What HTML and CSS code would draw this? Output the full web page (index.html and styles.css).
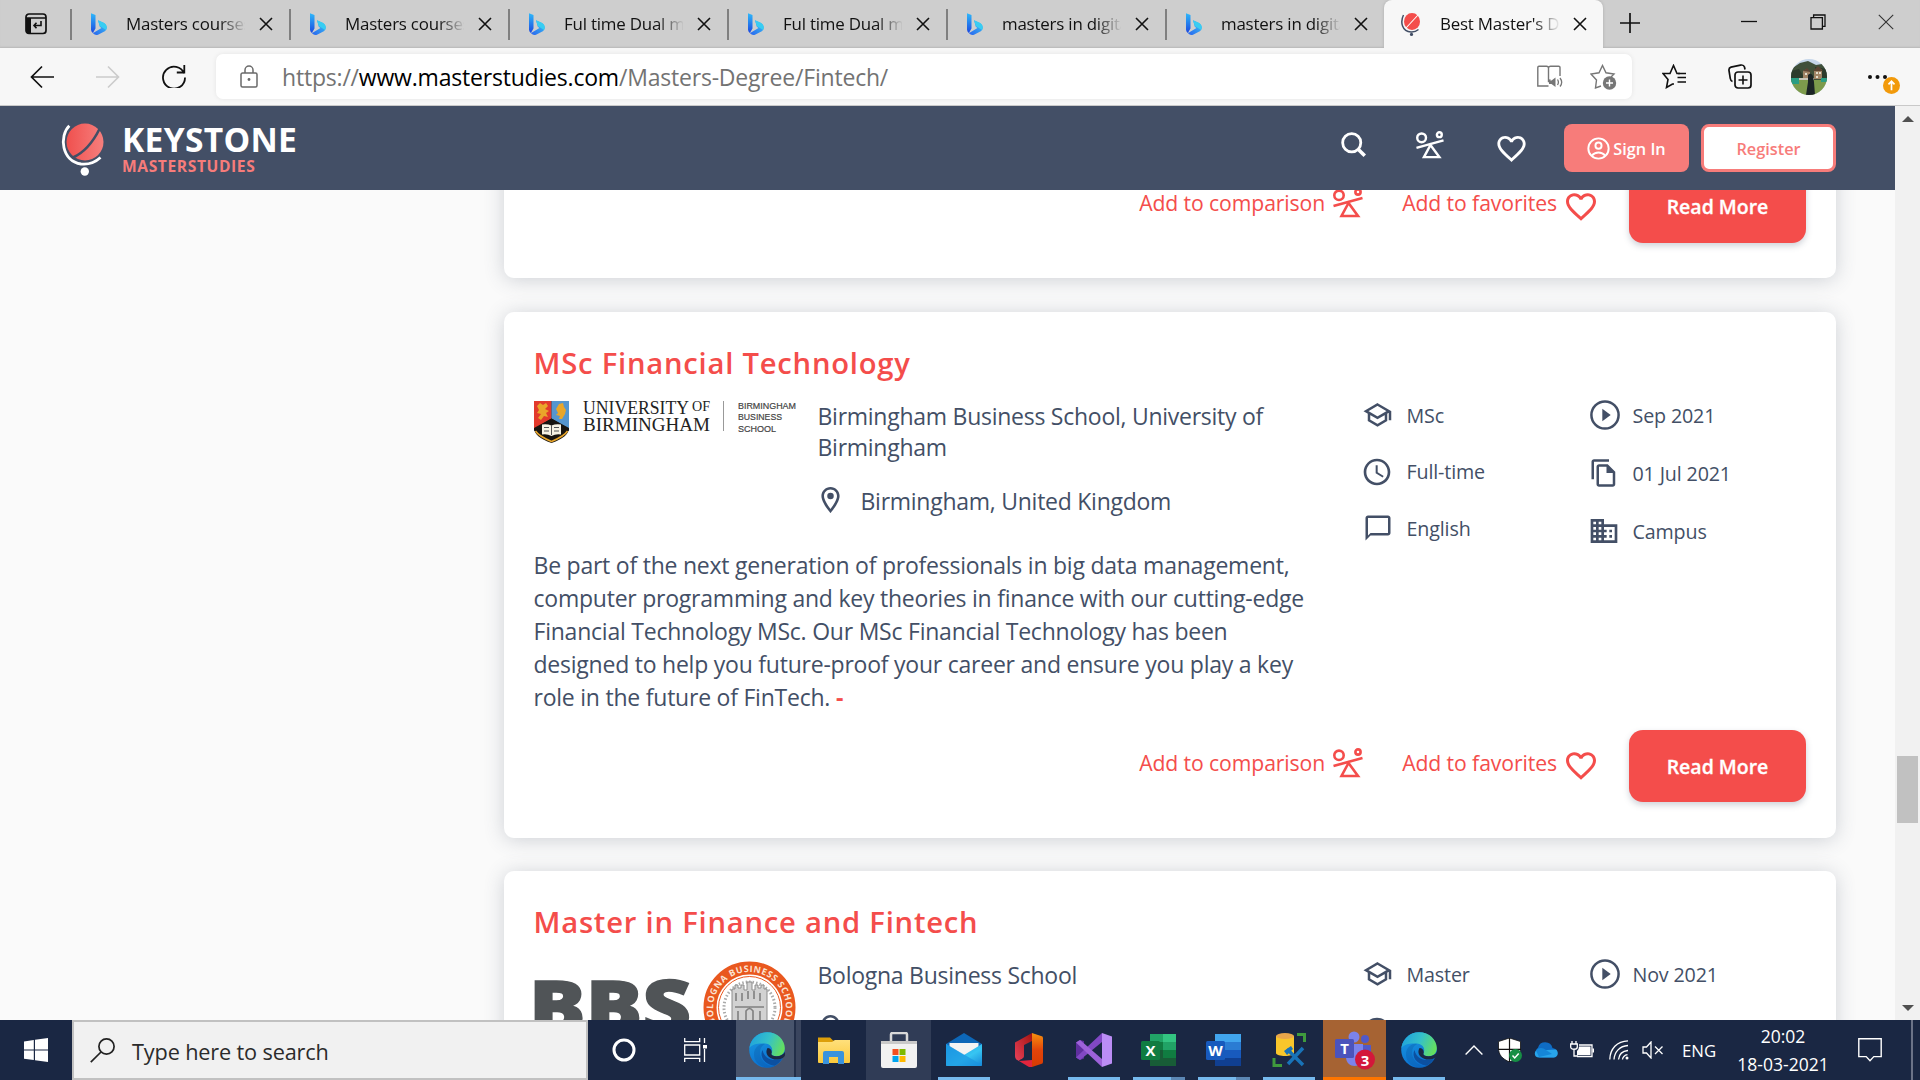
FILE: index.html
```html
<!DOCTYPE html>
<html lang="en">
<head>
<meta charset="utf-8">
<title>Best Master's Degrees in Fintech 2021</title>
<link rel="stylesheet" href="styles.css">
</head>
<body>
<svg class="sprite" aria-hidden="true">
  <defs>
    <linearGradient id="bingA" x1="0" y1="0" x2="0" y2="1"><stop offset="0" stop-color="#2fb8fa"/><stop offset="1" stop-color="#1b48e0"/></linearGradient>
    <linearGradient id="bingB" x1="0" y1="1" x2="1" y2="0"><stop offset="0" stop-color="#2a62ee"/><stop offset="1" stop-color="#37c9f5"/></linearGradient>
    <linearGradient id="globe" x1="0" y1="0" x2="1" y2="0"><stop offset="0" stop-color="#f0504e"/><stop offset="1" stop-color="#f67f7d"/></linearGradient>
    <linearGradient id="edgeTop" x1="0" y1="0.3" x2="1" y2="0.6"><stop offset="0" stop-color="#1fa2dc"/><stop offset=".5" stop-color="#35c1c9"/><stop offset="1" stop-color="#67e05a"/></linearGradient>
    <linearGradient id="edgeLeft" x1="0" y1="0" x2="0.4" y2="1"><stop offset="0" stop-color="#1b9de2"/><stop offset="1" stop-color="#0a6fd0"/></linearGradient>
    <linearGradient id="mailBody" x1="0" y1="0" x2="1" y2="1"><stop offset="0" stop-color="#1b9be8"/><stop offset=".6" stop-color="#37c5f2"/><stop offset="1" stop-color="#1586d8"/></linearGradient>
    <linearGradient id="officeL" x1="0" y1="1" x2="1" y2="0"><stop offset="0" stop-color="#e8415a"/><stop offset="1" stop-color="#a41410"/></linearGradient>
    <linearGradient id="officeR" x1="0" y1="0" x2="0" y2="1"><stop offset="0" stop-color="#f7920f"/><stop offset=".5" stop-color="#e2440a"/><stop offset="1" stop-color="#d83b01"/></linearGradient>
    <linearGradient id="folder" x1="0" y1="0" x2="0" y2="1"><stop offset="0" stop-color="#ffe07c"/><stop offset="1" stop-color="#fbc93c"/></linearGradient>
    <clipPath id="round"><circle cx="18" cy="18" r="18"/></clipPath>
  </defs>
  <symbol id="bing" viewBox="0 0 16 22"><path d="M0 .3 4.500 2v13.600L1.900 20A4 4 0 0 1 0 16.500z" fill="url(#bingA)"/><path d="m7 7.300 6 2.600c3.400 2 3.600 6.200.8 8.400L7 21.700c-2.300.8-4.300-.3-5.400-2.200l1 .3L10.500 15l-1.700-1.200z" fill="url(#bingB)"/><path d="m7 7.300 5.700 2.500c3 1.500 3.600 4.800 2.400 7.200L10.300 14l-1.400-.7z" fill="#38cdf2"/></symbol>
  <symbol id="x" viewBox="0 0 14 14"><path d="M1 1l12 12M13 1 1 13" fill="none" stroke="currentColor" stroke-width="1.600"/></symbol>
  <symbol id="compare" viewBox="0 0 30 30"><g fill="none" stroke="currentColor" stroke-width="2.600"><circle cx="6" cy="7.300" r="4.700"/><circle cx="25" cy="4" r="2.600"/><path d="M.5 18 29.500 10M15.500 15 8.500 28h16.500z"/></g></symbol>
  <symbol id="heart" viewBox="2 3 20 18.400"><path fill="currentColor" d="M16.500 3c-1.740 0-3.410.81-4.500 2.090C10.910 3.810 9.240 3 7.500 3 4.420 3 2 5.420 2 8.500c0 3.780 3.400 6.860 8.550 11.540L12 21.350l1.450-1.320C18.600 15.360 22 12.280 22 8.500 22 5.420 19.580 3 16.500 3zm-4.400 15.550l-.1.100-.1-.1C7.140 14.240 4 11.390 4 8.500 4 6.500 5.500 5 7.500 5c1.540 0 3.040.99 3.570 2.360h1.870C13.460 5.990 14.960 5 16.500 5c2 0 3.500 1.500 3.500 3.500 0 2.890-3.140 5.740-7.900 10.050z"/></symbol>
  <symbol id="school" viewBox="0 0 30 24"><path d="M14.500 1.500 26 8.200 14.500 14.900 3 8.200zM6 10.500v6.800l8.500 5 8.500-5v-6.800M27 8.500v8.800" fill="none" stroke="currentColor" stroke-width="2.500"/></symbol>
  <symbol id="clock" viewBox="0 0 24 24"><path fill="currentColor" d="M11.990 2C6.470 2 2 6.480 2 12s4.470 10 9.990 10C17.520 22 22 17.520 22 12S17.520 2 11.990 2zM12 20c-4.420 0-8-3.580-8-8s3.580-8 8-8 8 3.580 8 8-3.580 8-8 8zm.5-13H11v6l5.250 3.150.75-1.230-4.500-2.670z"/></symbol>
  <symbol id="chat" viewBox="0 0 24 24"><path fill="currentColor" d="M20 2H4c-1.100 0-2 .9-2 2v18l4-4h14c1.100 0 2-.9 2-2V4c0-1.100-.9-2-2-2zm0 14H6l-2 2V4h16v12z"/></symbol>
  <symbol id="play" viewBox="0 0 30 30"><circle cx="15" cy="15" r="13.600" fill="none" stroke="currentColor" stroke-width="2.500"/><path d="M12.300 8.700v12.600l8.400-6.300z" fill="currentColor"/></symbol>
  <symbol id="copy" viewBox="0 0 24 24"><path fill="currentColor" d="M16 1H4c-1.100 0-2 .9-2 2v14h2V3h12V1zm-1 4H8c-1.100 0-1.990.9-1.990 2L6 21c0 1.100.89 2 1.990 2H19c1.100 0 2-.9 2-2V11l-6-6zm4 16H8V7h6v5h5v9z"/></symbol>
  <symbol id="campus" viewBox="0 0 24 24"><path fill="currentColor" d="M12 7V3H2v18h20V7H12zM6 19H4v-2h2v2zm0-4H4v-2h2v2zm0-4H4V9h2v2zm0-4H4V5h2v2zm4 12H8v-2h2v2zm0-4H8v-2h2v2zm0-4H8V9h2v2zm0-4H8V5h2v2zm10 12h-8v-2h2v-2h-2v-2h2v-2h-2V9h8v10zm-2-8h-2v2h2v-2zm0 4h-2v2h2v-2z"/></symbol>
  <symbol id="pin" viewBox="5 2 14 20"><path fill="currentColor" d="M12 2C8.130 2 5 5.130 5 9c0 5.250 7 13 7 13s7-7.750 7-13c0-3.870-3.130-7-7-7zM7 9c0-2.760 2.240-5 5-5s5 2.240 5 5c0 2.880-2.880 7.190-5 9.880C9.920 16.210 7 11.850 7 9z"/><circle cx="12" cy="9" r="2.500" fill="currentColor"/></symbol>
  <symbol id="edge" viewBox="0 0 36 36"><circle cx="18" cy="18" r="17.800" fill="url(#edgeLeft)"/><path d="M.4 16C2 6 9.500.2 18 .2c10.500 0 17.800 7.500 17.800 16 0 5-3.700 8-8.300 8-4 0-5.500-1.500-5-3 1.700-3 .7-9-6.500-9.700C9 11 3 12 .4 16z" fill="url(#edgeTop)"/><path d="M16 12c-4 2-6 6.500-4.500 12 2 7 9 11 15 10-10 4.500-21-1-21.500-11C5 15 11 11 16 12z" fill="#0c59a4" opacity=".35"/><path d="M13.500 18c-3 6 1 14 12 15.700 3-1.400 6-4 7.600-7.200C26 30 15.500 28 13.500 18z" fill="#0c50a0"/><path d="M33.500 26.200C29 28.500 23 28 19.500 24.500c-2-2-3-5-1-8.500 3 0 5 3 4 5.500-.5 1.500 1 2.700 5 2.700 4 0 6.800-1.500 8.400-4.200 1 3-.4 5-2.400 6.200z" fill="#1c2843"/></symbol>
</svg>

<div class="tabs">
  <svg class="tab-actions" viewBox="0 0 22 22"><rect x="1" y="1" width="20" height="19.500" rx="3" fill="none" stroke="#111" stroke-width="1.700"/><path d="M1 5h20" stroke="#111" stroke-width="1.500"/><path d="M1 5h5v15.500H3a2 2 0 0 1-2-2z" fill="#111"/><path d="M16 8v4.500H9M11.500 9.800 9 12.500l2.500 2.700" fill="none" stroke="#111" stroke-width="1.600"/></svg>
  <div class="tab"><svg class="fav"><use href="#bing"/></svg><span>Masters courses</span><svg class="close"><use href="#x"/></svg></div>
  <div class="tab"><svg class="fav"><use href="#bing"/></svg><span>Masters courses</span><svg class="close"><use href="#x"/></svg></div>
  <div class="tab"><svg class="fav"><use href="#bing"/></svg><span>Ful time Dual ma</span><svg class="close"><use href="#x"/></svg></div>
  <div class="tab"><svg class="fav"><use href="#bing"/></svg><span>Ful time Dual ma</span><svg class="close"><use href="#x"/></svg></div>
  <div class="tab"><svg class="fav"><use href="#bing"/></svg><span>masters in digital</span><svg class="close"><use href="#x"/></svg></div>
  <div class="tab"><svg class="fav"><use href="#bing"/></svg><span>masters in digital</span><svg class="close"><use href="#x"/></svg></div>
  <div class="tab active"><svg class="fav" viewBox="0 0 20 23"><ellipse cx="11" cy="8.500" rx="8" ry="8.500" fill="#f44d4b"/><path d="M5 15 17 2" stroke="#fff" stroke-width="1.100"/><path d="M2.500 2C-1 9 1 18.500 10 19c3 .2 5.500-.8 7.500-2.500" fill="none" stroke="#434f66" stroke-width="1.500"/><circle cx="10.500" cy="21.400" r="1.600" fill="#434f66"/></svg><span>Best Master's De</span><svg class="close"><use href="#x"/></svg></div>
  <svg class="new-tab" viewBox="0 0 20 20"><path d="M10 0v20M0 10h20" stroke="#111" stroke-width="1.700"/></svg>
  <svg class="win" viewBox="0 0 16 16"><path d="M0 7.500h16" stroke="#111" stroke-width="1.300"/></svg>
  <svg class="win" viewBox="0 0 16 16"><path d="M3.600 3.500V1H15v11.400h-2.500M1 3.600h11.400V15H1z" fill="none" stroke="#111" stroke-width="1.300"/></svg>
  <svg class="win" viewBox="0 0 16 16"><path d="M.8.800l14.400 14.400M15.200.800.8 15.200" stroke="#333" stroke-width="1.100"/></svg>
</div>

<div class="toolbar">
  <svg class="nav" viewBox="0 0 24 24"><path d="M24 12H1.500M12 1.500 1.500 12 12 22.500" fill="none" stroke="#111" stroke-width="1.700"/></svg>
  <svg class="nav" viewBox="0 0 24 24"><path d="M0 12h22.500M12 1.500 22.500 12 12 22.500" fill="none" stroke="#ccc" stroke-width="1.700"/></svg>
  <svg class="nav reload" viewBox="0 0 24 24"><path d="M22.200 9.500A11 11 0 1 0 23 13.500M22.300 1v7.500h-7.500" fill="none" stroke="#111" stroke-width="1.800"/></svg>
  <div class="address">
    <svg class="lock" viewBox="0 0 18 23"><path d="M1 9.500A1.500 1.500 0 0 1 2.500 8h13A1.500 1.500 0 0 1 17 9.500v11a1.500 1.500 0 0 1-1.500 1.500h-13A1.500 1.500 0 0 1 1 20.500zM5 8V5a4 4 0 0 1 8 0v3" fill="none" stroke="#6a6a6a" stroke-width="1.500"/><circle cx="9" cy="14.500" r="1.400" fill="#6a6a6a"/></svg>
    <span class="url">https://<b>www.masterstudies.com</b>/Masters-Degree/Fintech/</span>
    <svg class="reader" viewBox="0 0 27 23"><path d="M12.500 21H1.800V2.500A1.300 1.300 0 0 1 3 1.200h7.500a2 2 0 0 1 2 2v14a2 2 0 0 1 2-2.200M12.500 3.200a2 2 0 0 1 2-2h8.200a1.300 1.300 0 0 1 1.300 1.300V11" fill="none" stroke="#767676" stroke-width="1.400"/><path d="M13 15.500h2.500l4-3v9.500l-4-3H13z" fill="#767676"/><path d="M21.500 14.500c1 1.500 1 4 0 5.500M24 13c2 2.500 2 6 0 8.500" fill="none" stroke="#767676" stroke-width="1.300"/></svg>
    <svg class="star" viewBox="0 0 27 26"><path d="M11 22 5.500 24l1-8L1 10l8-1.200 3.500-7.300L16 8.800l8 1.200-3 3" fill="none" stroke="#767676" stroke-width="1.400"/><circle cx="19.500" cy="19" r="6.700" fill="#767676"/><path d="M19.500 15.500v7M16 19h7" stroke="#fff" stroke-width="1.400"/></svg>
  </div>
  <svg class="favs" viewBox="0 0 25 25"><path d="M18 9.500h-3L11.500 1.500 8 9.500H1l5 6-1.500 8 6-3.500h1.500" fill="none" stroke="#111" stroke-width="1.600"/><path d="M15.500 18H24M15.500 13.500H24M16 9.500H24" stroke="#111" stroke-width="1.600"/></svg>
  <svg class="coll" viewBox="0 0 24 25"><rect x="7" y="8" width="16" height="16" rx="3" fill="none" stroke="#111" stroke-width="1.700"/><path d="M15 11.500v9M10.500 16h9" stroke="#111" stroke-width="1.600"/><path d="M4.500 17.500C3 17 2.500 16 2.300 14.500L1 6.500c-.3-2 .5-3 2-3.400l9.500-2C14.500.8 16 1.500 16.500 3l.5 2.500" fill="none" stroke="#111" stroke-width="1.700"/></svg>
  <svg class="avatar" viewBox="0 0 36 36"><g clip-path="url(#round)"><path fill="#c5d6ea" d="M0 0h36v36H0z"/><path fill="#40503a" d="M0 10 9 4l8-2 8 4 6-1 5 5v12H0z"/><path fill="#2c3b2c" d="m0 12 8-2 5 8-13 6zM24 8l12 2v10H24z"/><path fill="#a08466" d="M12 12l4-2 3 3v7h-7zM23 12l4-4 4 3v9h-8z"/><path fill="#5c4433" d="M12 12l4-3 4 4zM22 12l5-5 5 5z"/><path fill="#e2dccb" d="M14 14h2v2h-2zM25 13h2v2h-2zM28 13h2v2h-2zM25 17h2v2h-2z"/><path fill="#7d9b4c" d="M0 21h36v15H0z"/><path fill="#2a9d83" d="M0 19h8v6H0zM30 19h6v4h-6z"/><path fill="#c9c6b8" d="M8 19h15v2H8z"/><path fill="#1b2426" d="M17 16q3-3 5 1l1 6 1 13h-9l2-13z"/></g></svg>
  <div class="more"><svg viewBox="0 0 32 24"><circle cx="2" cy="12" r="2" fill="#111"/><circle cx="9.500" cy="12" r="2" fill="#111"/><circle cx="17" cy="12" r="2" fill="#111"/></svg><svg class="badge" viewBox="0 0 18 18"><circle cx="9" cy="9" r="9" fill="#f29a0b"/><path d="M9 14V4.500M5.800 7.800 9 4.500l3.200 3.300" fill="none" stroke="#fff" stroke-width="1.800"/></svg></div>
</div>

<div class="window">
  <div class="view">
    <header class="site">
      <svg class="globe" viewBox="0 0 44 53"><ellipse cx="24" cy="19" rx="18.500" ry="18.500" fill="url(#globe)"/><path d="M12 34.500C22 30 31 21 38.500 6" fill="none" stroke="#434f66" stroke-width="2.600"/><path d="M8.300 2.800C-2 13 .5 38 20 41c7 .8 14-1.500 19.500-6.500" fill="none" stroke="#fff" stroke-width="2.800"/><circle cx="23.800" cy="48.500" r="4.200" fill="#fff"/></svg>
      <div class="brand"><strong>KEYSTONE</strong><em>MASTERSTUDIES</em></div>
      <svg class="search" viewBox="0 0 24 24"><circle cx="10.300" cy="10.300" r="8.700" fill="none" stroke="#fff" stroke-width="2.700"/><path d="m16.500 16.500 6.300 6.300" stroke="#fff" stroke-width="3.400"/></svg>
      <svg class="cmp"><use href="#compare"/></svg>
      <svg class="hrt"><use href="#heart"/></svg>
      <a class="signin"><svg viewBox="0 0 24 24"><circle cx="12" cy="12" r="10.600" fill="none" stroke="#fff" stroke-width="2"/><circle cx="12" cy="9" r="3.200" fill="none" stroke="#fff" stroke-width="2"/><path d="M5 19.500c3.500-4.500 10.500-4.500 14 0" fill="none" stroke="#fff" stroke-width="2"/></svg>Sign In</a>
      <a class="register">Register</a>
    </header>
    <main>
      <article class="card tail">
        <footer><a class="act">Add to comparison<svg class="c"><use href="#compare"/></svg></a><a class="act">Add to favorites<svg class="h"><use href="#heart"/></svg></a><a class="read">Read More</a></footer>
      </article>
      <article class="card">
        <h2>MSc Financial Technology</h2>
        <div class="cols">
          <div class="info">
            <div class="school">
              <svg class="logo" viewBox="0 0 262 43"><path d="M0 0h35v27q0 9-17.500 15Q0 36 0 27z" fill="#181510"/><path d="M0 0h17.500v17.500L0 28z" fill="#e23a2c"/><path d="M17.500 0H35v28L17.500 17.500z" fill="#5596cf"/><path d="M3 5l3-3 3 2 3-2 2 3-3 3 4 2-3 2 2 4-4-1-3 4-3-2 3-4-4-1 2-3zM22 8l3-5 4-1 1 4 2 3-1 4-3 5-3 0 1-3-4-1 2-2z" fill="#e9a62a"/><path d="M0 27 17.500 17.500 35 27v3L17.500 20 0 30z" fill="#181510"/><path d="M1.500 30q3 5 16 10.500Q30.500 35 33.500 30" fill="none" stroke="#e9a62a" stroke-width="1.500"/><path d="M8 23.500q5-1 9.500 1 4.500-2 9.500-1v10q-5-1-9.500 1.500Q13 32.500 8 33.500z" fill="#f7f3e4"/><path d="M17.500 24v10M10 26.500h5M20 26.500h5M10 30h5M20 30h5" stroke="#555" stroke-width="1"/><g font-family="Liberation Serif, serif" fill="#222" font-size="19"><text x="49" y="13" textLength="106" lengthAdjust="spacingAndGlyphs">UNIVERSITY</text><text x="158" y="9.500" font-size="14" textLength="18" lengthAdjust="spacingAndGlyphs">OF</text><text x="49" y="30" textLength="127" lengthAdjust="spacingAndGlyphs">BIRMINGHAM</text></g><path d="M189.500 0v30" stroke="#999"/><g font-family="Liberation Sans, sans-serif" font-size="9.800" fill="#444" stroke="#444" stroke-width=".2"><text x="204" y="8.200" textLength="58" lengthAdjust="spacingAndGlyphs">BIRMINGHAM</text><text x="204" y="19.400" textLength="44" lengthAdjust="spacingAndGlyphs">BUSINESS</text><text x="204" y="30.600" textLength="38" lengthAdjust="spacingAndGlyphs">SCHOOL</text></g></svg>
              <div><p class="inst">Birmingham Business School, University of Birmingham</p><p class="place"><svg><use href="#pin"/></svg>Birmingham, United Kingdom</p></div>
            </div>
            <p class="desc">Be part of the next generation of professionals in big data management, computer programming and key theories in finance with our cutting-edge Financial Technology MSc. Our MSc Financial Technology has been designed to help you future-proof your career and ensure you play a key role in the future of FinTech. <b>-</b></p>
          </div>
          <ul class="meta">
            <li><svg class="i-school"><use href="#school"/></svg>MSc</li>
            <li><svg class="i-clock"><use href="#clock"/></svg>Full-time</li>
            <li><svg class="i-chat"><use href="#chat"/></svg>English</li>
          </ul>
          <ul class="meta second">
            <li><svg class="i-play"><use href="#play"/></svg>Sep 2021</li>
            <li><svg class="i-chat"><use href="#copy"/></svg>01 Jul 2021</li>
            <li><svg class="i-campus"><use href="#campus"/></svg>Campus</li>
          </ul>
        </div>
        <footer><a class="act">Add to comparison<svg class="c"><use href="#compare"/></svg></a><a class="act">Add to favorites<svg class="h"><use href="#heart"/></svg></a><a class="read">Read More</a></footer>
      </article>
      <article class="card">
        <h2>Master in Finance and Fintech</h2>
        <div class="cols">
          <div class="info">
            <div class="school">
              <svg class="logo tall" viewBox="0 0 262 93"><text x="-5" y="73" font-family="Open Sans, sans-serif" font-weight="800" font-size="74" fill="#505457" stroke="#505457" stroke-width="1.500" textLength="162" lengthAdjust="spacingAndGlyphs">BBS</text><circle cx="215.500" cy="46.500" r="39.500" fill="#fff" stroke="#e9581f" stroke-width="13"/><circle cx="215.500" cy="46.500" r="31" fill="none" stroke="#e9581f" stroke-width="1"/><path id="ring" d="M182 62A36.500 36.500 0 1 1 249 62" fill="none"/><text font-family="Open Sans, sans-serif" font-weight="700" font-size="9" fill="#fbe3d2" textLength="143"><textPath href="#ring">BOLOGNA BUSINESS SCHOOL</textPath></text><circle cx="215.500" cy="46.500" r="25.500" fill="none" stroke="#aaa" stroke-width="3" stroke-dasharray="1.500 2"/><path d="M198 62V28h3v-4h3v3h3v-3h3v5h3v-8h5v8h3v-5h3v3h3v-3h3v4h3v34z" fill="#d2d2d2" stroke="#8c8c8c"/><path d="M202 32v8M208 32v8M214 30v8M220 30v8M226 32v8M201 46h29M204 50v10M212 60V50q3.500-5 7 0v10M226 50v10" stroke="#808080" stroke-width="1.600" fill="none"/></svg>
              <div><p class="inst">Bologna Business School</p><p class="place"><svg><use href="#pin"/></svg></p></div>
            </div>
          </div>
          <ul class="meta">
            <li><svg class="i-school"><use href="#school"/></svg>Master</li>
            <li><svg class="i-clock"><use href="#clock"/></svg></li>
          </ul>
          <ul class="meta second">
            <li><svg class="i-play"><use href="#play"/></svg>Nov 2021</li>
          </ul>
        </div>
      </article>
    </main>
  </div>
  <div class="scroll"><i class="up"></i><i class="thumb"></i><i class="down"></i></div>
</div>

<div class="taskbar">
  <div class="start"><svg viewBox="0 0 24 24"><path fill="#fff" d="M0 3.400 9.800 2v9.500H0zM11 1.800 24 0v11.500H11zM0 12.600h9.800v9.500L0 20.700zM11 12.600h13V24l-13-1.700z"/></svg></div>
  <div class="find"><svg viewBox="0 0 25 25"><circle cx="16.500" cy="8.500" r="7.600" fill="none" stroke="#222" stroke-width="1.700"/><path d="M11 14 .8 24.200" stroke="#222" stroke-width="1.700"/></svg>Type here to search</div>
  <div class="sys"><svg viewBox="0 0 24 24"><circle cx="12" cy="12" r="10" fill="none" stroke="#fff" stroke-width="3"/></svg></div>
  <div class="sys"><svg viewBox="0 0 24 24"><g fill="none" stroke="#fff" stroke-width="1.300"><path d="M.7 0v3.600h15V0M.7 24v-3.600h15V24M.7 7h15v10h-15zM20.500 0v5M20.500 11v13"/></g><path d="M19 7h4v3.500h-4z" fill="#fff"/></svg></div>
  <div class="apps">
    <div class="app on"><svg><use href="#edge"/></svg></div>
    <div class="app"><svg viewBox="0 0 36 36"><path d="M2 5.500h12l3 3h17V29H2z" fill="#dd9f0a"/><path d="M2 10h14l3-2h15v22a1 1 0 0 1-1 1H3a1 1 0 0 1-1-1z" fill="url(#folder)"/><path d="M7 21a2 2 0 0 1 2-2h17a2 2 0 0 1 2 2v11h-6v-7h-9v7H7z" fill="#3a93dd"/></svg></div>
    <div class="app hover"><svg viewBox="0 0 36 36"><path d="M10 12V2.500A1.500 1.500 0 0 1 11.500 1h13A1.500 1.500 0 0 1 26 2.500V12" fill="none" stroke="#d9d9d9" stroke-width="2.500"/><path d="M0 9h36v25a2 2 0 0 1-2 2H2a2 2 0 0 1-2-2z" fill="#f2f2f2"/><path d="M0 9h36v3H0z" fill="#c9c9c9"/><path fill="#f25022" d="M11.500 17h6v6h-6z"/><path fill="#7fba00" d="M18.500 17h6v6h-6z"/><path fill="#00a4ef" d="M11.500 24h6v6h-6z"/><path fill="#ffb900" d="M18.500 24h6v6h-6z"/></svg></div>
    <div class="app run"><svg viewBox="0 0 36 36"><path d="M0 12 18 1l18 11v6H0z" fill="#0d67b8"/><path d="M3.500 11h29v14h-29z" fill="#f3f3f3"/><path d="M0 12l18 11 18-11v21a1 1 0 0 1-1 1H1a1 1 0 0 1-1-1z" fill="url(#mailBody)"/><path d="M0 12 36 33a1 1 0 0 1-1 1H1a1 1 0 0 1-1-1z" fill="#1a94e0" opacity=".65"/></svg></div>
    <div class="app"><svg viewBox="0 0 36 36"><path d="M4 10.500 21 1v8l-8 4v11c0 3-4 3-5 5-3-1-4-3-4-5z" fill="url(#officeL)"/><path d="M21 1l9 3a2 2 0 0 1 2 2v24a2 2 0 0 1-2 2l-9 3V10z" fill="url(#officeR)"/><path d="M8 29l13-1v7h-3z" fill="#e3253d"/></svg></div>
    <div class="app run"><svg viewBox="0 0 36 36"><path d="M0 10.500 4 8l4 1v17.500L4 28l-4-2.500z" fill="#5f2f9e"/><path d="M0 25.500 4 28 26 10V1z" fill="#8148c4"/><path d="M26 1 36 4.500v27L26 35z" fill="#bb8df5"/><path d="m0 10.500 4-2.500 22 19v8z" fill="#9d62d9"/></svg></div>
    <div class="app run multi"><svg viewBox="0 0 36 36"><path d="M9 2h26v32H9z" fill="#21a366"/><path d="M22 2h13v8H22z" fill="#33c481"/><path d="M9 10h13v8H9z" fill="#107c41"/><path d="M9 18h13v16H9z" fill="#185c37"/><path d="M22 18h13v8H22z" fill="#107c41"/><path d="M22 26h13v8H22z" fill="#185c37"/><rect y="9" width="19" height="19" rx="1.500" fill="#107c41"/><text x="9.500" y="24" text-anchor="middle">X</text></svg></div>
    <div class="app run multi"><svg viewBox="0 0 36 36"><path d="M9 2h26v8H9z" fill="#41a5ee"/><path d="M9 10h26v8H9z" fill="#2b7cd3"/><path d="M9 18h26v8H9z" fill="#185abd"/><path d="M9 26h26v8H9z" fill="#103f91"/><rect y="9" width="19" height="19" rx="1.500" fill="#185abd"/><text x="9.500" y="24" text-anchor="middle">W</text></svg></div>
    <div class="app run"><svg viewBox="0 0 36 36"><path d="M5 4v17c0 4 18 4 18 0V4z" fill="#f9c62b"/><ellipse cx="14" cy="4" rx="9" ry="3" fill="#e9a64a"/><path d="M26 2.500h7.500V10M3 26v7.500h8" fill="none" stroke="#3f9a3d" stroke-width="3"/><path d="m16 17 16 16M32 16 17 32" stroke="#1873b8" stroke-width="3.500"/><path d="m13 19 7-5 2 3-6 6z" fill="#1873b8"/></svg></div>
    <div class="app teams"><svg viewBox="0 0 40 40"><circle cx="19" cy="7" r="5.500" fill="#7b83eb"/><circle cx="30" cy="9" r="4" fill="#5059c9"/><path d="M11 14h17v13c0 12-17 12-17 0z" fill="#7b83eb"/><path d="M28 15h8v11c0 4-4 6-8 5z" fill="#5059c9"/><rect y="9" width="19" height="19" rx="1.500" fill="#4b53bc"/><text x="9.500" y="24" text-anchor="middle">T</text><circle cx="30" cy="29.500" r="10" fill="#d3173a"/><text x="30" y="35.500" text-anchor="middle" font-size="17">3</text></svg></div>
    <div class="app run"><svg><use href="#edge"/></svg></div>
  </div>
  <div class="tray">
    <svg class="chev" viewBox="0 0 18 10"><path d="m.6 9.400 8.400-8.400 8.400 8.400" fill="none" stroke="#fff" stroke-width="1.400"/></svg>
    <svg class="t24" viewBox="0 0 24 24"><path d="M11.500 0 22.500 3.500V10c0 7-4 11-11 14C4.500 21 .5 17 .5 10V3.500z" fill="#fff" stroke="#111" stroke-width=".8"/><path d="M11.500 0v24M0 11.300h23" stroke="#111" stroke-width="1.200"/><circle cx="17.500" cy="17.500" r="6.500" fill="#178f45"/><path d="m14.500 17.500 2.200 2.400 4-4.500" fill="none" stroke="#fff" stroke-width="1.500"/></svg>
    <svg class="t24" viewBox="0 0 24 24"><path d="M6 19.500A5.500 5.500 0 0 1 4 9.700 7.500 7.500 0 0 1 18.500 10 5 5 0 0 1 20 19.500z" fill="#0f6cc4"/><path d="M5 19.500C1 19.500-.5 15.500 2 12.500L13 12l9-.5c3.500 3 1.500 8-2.500 8z" fill="#28a4ea"/><path d="M2 12.500C5 9 9 9.500 12 12l6 4-13 3z" fill="#1586d8"/></svg>
    <svg class="t24" viewBox="0 0 24 24"><path d="M2 3v3M6 3v3M.7 6h6.600v3c0 3-6.600 3-6.600 0zM4 12v6h4M9 7h13v11.500H7" fill="none" stroke="#fff" stroke-width="1.300"/><path d="M9 8.500h11.500V17H7v-4q2-1 2-4.500zM22.500 10.500H24v4h-1.500z" fill="#fff"/></svg>
    <svg class="wifi" viewBox="0 0 20 20"><g fill="none" stroke="#fff" stroke-width="1.300"><path d="M.8 19.500C1 9 8 1 19 .8M5 19.500C5.500 12 10.500 6 19 5.500M9.500 19.500c.5-4.500 3.500-8.500 9.500-9M13.500 19.500c0-2 2-4.500 5-4.800"/></g><circle cx="18" cy="18" r="1.500" fill="#fff"/></svg>
    <svg class="snd" viewBox="0 0 22 18"><path d="M1 6h3.500L9 1v16l-4.500-5H1zM13 5.500l7.500 7.500M20.500 5.500 13 13" fill="none" stroke="#fff" stroke-width="1.300"/></svg>
    <span class="lang">ENG</span>
    <div class="clock"><span>20:02</span><span>18-03-2021</span></div>
    <svg class="note" viewBox="0 0 24 24"><path d="M.8.800h22.400v17.800h-7.400L12 22.800l-3.800-4.200H.8z" fill="none" stroke="#fff" stroke-width="1.400"/></svg>
    <i class="peek"></i>
  </div>
</div>
</body>
</html>
```
FILE: styles.css
```css
* { box-sizing: border-box; }
body { margin: 0; width: 1920px; height: 1080px; overflow: hidden; display: flex; flex-direction: column; font-family: "Open Sans", "Noto Sans", sans-serif; color: #434f66; background: #fafafa; }
svg { display: block; flex: none; }
p, h2, ul { margin: 0; padding: 0; font-weight: 400; }
.sprite { position: absolute; width: 0; height: 0; }

/* browser tabs */
.tabs { height: 48px; flex: none; display: flex; align-items: center; background: #cecece; color: #111; box-shadow: inset 0 -2px 2px -1px #b8b8b8; }
.tab-actions { width: 22px; height: 22px; margin: 0 23px 0 25px; }
.tab { width: 219px; height: 48px; display: flex; align-items: center; flex: none; }
.tab::before { content: ""; width: 2px; height: 31px; background: #808080; flex: none; margin-right: 19px; }
.fav { width: 16px; height: 22px; }
.tab span { width: 119px; margin: 0 14px 0 19px; font-size: 16.900px; letter-spacing: -.2px; line-height: 24px; white-space: nowrap; overflow: hidden; -webkit-mask-image: linear-gradient(90deg, #000 78%, transparent 101%); mask-image: linear-gradient(90deg, #000 78%, transparent 101%); }
.close { width: 14px; height: 14px; }
.tab.active { background: #f7f7f7; border-radius: 8px 8px 0 0; box-shadow: 0 0 3px #aaa; clip-path: inset(0 -3px 0 -3px); }
.tab.active::before { width: 0; margin-right: 17px; }
.tab.active .fav { width: 20px; height: 23px; }
.new-tab { width: 20px; height: 20px; margin: -3px 101px 0 17px; }
.win { width: 16px; height: 16px; margin: -5px 52.500px 0 0; }

/* browser toolbar */
.toolbar { height: 58px; flex: none; display: flex; align-items: center; background: #f7f7f7; border-bottom: 1px solid #c9c9c9; padding-left: 30px; }
.nav { width: 24px; height: 24px; margin-right: 42px; }
.nav.reload { margin-right: 30px; margin-top: -1px; }
.address { width: 1416px; height: 45px; display: flex; align-items: center; background: #fff; border-radius: 7px; box-shadow: 0 0 5px rgba(0, 0, 0, .08); padding: 0 15px 0 24px; }
.lock { width: 18px; height: 23px; margin-right: 24px; }
.url { flex: 1; font-size: 23px; letter-spacing: -.2px; line-height: 30px; padding-top: 1px; color: #737373; }
.url b { font-weight: 400; color: #000; }
.reader { width: 27px; height: 23px; margin-right: 27px; }
.star { width: 27px; height: 26px; }
.favs { width: 25px; height: 25px; margin-left: 30px; }
.coll { width: 24px; height: 25px; margin-left: 41px; }
.avatar { width: 36px; height: 36px; margin-left: 39px; }
.more { position: relative; margin-left: 41px; }
.more svg { width: 32px; height: 24px; }
.more .badge { position: absolute; left: 15px; top: 12px; width: 17px; height: 17px; }

/* page */
.window { height: 914px; flex: none; display: flex; }
.view { width: 1895px; display: flex; flex-direction: column; overflow: hidden; background: #fafafa; }
.site { height: 84px; flex: none; display: flex; align-items: center; background: #434f66; padding-left: 61px; }
.globe { width: 44px; height: 53px; margin-top: 2px; }
.brand { display: flex; flex-direction: column; margin: 3px auto 0 17px; color: #fff; }
.brand strong { font-size: 33.600px; line-height: 33px; font-weight: 700; letter-spacing: .3px; }
.brand em { font-style: normal; font-weight: 700; font-size: 15.600px; line-height: 21px; letter-spacing: .6px; color: #f77c7a; }
.search { width: 25px; height: 25px; margin: -7px 0 0 0; }
.cmp { width: 28px; height: 28px; color: #fff; margin: -6px 0 0 50px; }
.hrt { width: 29px; height: 26px; color: #fff; margin: 1px 0 0 53px; }
.signin, .register { height: 48px; display: flex; align-items: center; justify-content: center; border-radius: 8px; font-size: 16.300px; font-weight: 600; padding-top: 1px; }
.signin { width: 125px; margin-left: 38px; gap: 3px; background: #f77c7a; color: #fff; }
.signin svg { width: 23px; height: 23px; }
.register { width: 135px; margin: 0 59px 0 12px; background: #fff; border: 3px solid #f77c7a; color: #f77c7a; }
main { flex: 1; min-height: 0; padding-left: 504px; overflow: hidden; display: flex; flex-direction: column; }
.card { width: 1332px; height: 526px; flex: none; margin-bottom: 33px; padding: 31px 30px 36px 29.500px; display: flex; flex-direction: column; background: #fff; border-radius: 10px; box-shadow: 0 2px 20px rgba(67, 79, 102, .24); }
.card.tail { height: 138px; margin: -50px 0 34px; padding-top: 0; padding-bottom: 35.500px; }
.card h2 { font-size: 29.200px; line-height: 40px; font-weight: 600; letter-spacing: .78px; color: #f44d4b; margin-bottom: 18px; }
.cols { display: flex; }
.info { width: 829px; flex: none; }
.school { display: flex; }
.logo { width: 262px; height: 43px; margin-right: 22px; }
.logo.tall { height: 93px; margin-top: 1px; }
.inst { width: 480px; font-size: 23px; letter-spacing: -.26px; line-height: 31px; }
.place { display: flex; align-items: center; min-height: 31px; margin-top: 23px; font-size: 23px; letter-spacing: -.26px; line-height: 31px; }
.place svg { width: 19px; height: 26px; margin: -3px 21px 0 3px; }
.desc { width: 790px; margin-top: 31.500px; font-size: 23px; letter-spacing: -.23px; line-height: 33.100px; }
.desc b { color: #f44d4b; font-weight: 700; }
.meta { list-style: none; width: 227px; flex: none; font-size: 19.700px; letter-spacing: -.15px; }
.meta li { display: flex; align-items: center; height: 28px; margin-bottom: 28.500px; }
.meta.second li { margin-bottom: 30px; }
.i-school { width: 30px; height: 24px; margin-right: 14px; }
.i-clock { width: 32px; height: 32px; margin: 0 14px 0 -2px; }
.i-chat { width: 30px; height: 30px; margin: 0 14px 0 0; }
.i-play { width: 30px; height: 30px; margin-right: 13px; }
.second .i-chat { margin: 0 14px 0 -1px; }
.i-campus { width: 32px; height: 32px; margin: 0 13px 0 -2px; }
.card footer { margin-top: auto; display: flex; justify-content: flex-end; align-items: center; color: #f44d4b; }
.act { display: flex; align-items: center; font-size: 21.200px; letter-spacing: -.1px; line-height: 28px; padding-bottom: 7px; }
.act .c { width: 30px; height: 30px; margin: 0 39px 0 8px; }
.act .h { width: 30px; height: 28px; margin: 7px 33px 0 9px; }
.read { width: 177px; height: 72px; display: flex; align-items: center; justify-content: center; border-radius: 14px; background: #f44d4b; color: #fff; font-size: 19.500px; font-weight: 600; -webkit-text-stroke: .3px #fff; box-shadow: 0 3px 6px rgba(67, 79, 102, .25); }

.scroll { width: 25px; display: flex; flex-direction: column; align-items: center; background: #f1f1f1; }
.scroll i { display: block; flex: none; }
.up { border: 6px solid transparent; border-top: 0; border-bottom-color: #505050; margin-top: 10px; }
.down { border: 6px solid transparent; border-bottom: 0; border-top-color: #505050; margin-top: 182px; }
.thumb { width: 21px; height: 67px; background: #c1c1c1; margin-top: 634px; }

/* taskbar */
.taskbar { height: 60px; flex: none; display: flex; background: #1a2743; color: #fff; }
.start, .sys { width: 72px; display: flex; align-items: center; justify-content: center; }
.start svg, .sys svg { width: 24px; height: 24px; }
.find { width: 516px; display: flex; align-items: center; gap: 17px; padding: 2px 0 0 16px; border: 2px solid #c1c1c1; background: #f1f1f1; color: #2b2b2b; font-size: 21.700px; letter-spacing: -.15px; }
.find svg { width: 25px; height: 25px; margin-top: -2px; }
.apps { display: flex; margin-left: 4px; }
.app { width: 65px; display: flex; align-items: center; justify-content: center; }
.app > svg { width: 36px; height: 36px; }
.app text { font-family: "Open Sans", sans-serif; font-weight: 700; font-size: 15px; fill: #fff; }
.on { background: linear-gradient(90deg, #48546c 58px, #222e48 58px 60px, #3a455e 60px); box-shadow: inset 0 -3px #76b9ed; padding-right: 3px; }
.hover { background: #303c56; }
.run { background: linear-gradient(#76b9ed, #76b9ed) center bottom / 52px 3px no-repeat; }
.multi { background: linear-gradient(90deg, #76b9ed 38px, #5c87b4 38px) center bottom / 52px 3px no-repeat; }
.teams { width: 63px; margin-left: 2px; background: #a66333; box-shadow: inset 0 -3px #ff7500; }
.teams > svg { width: 40px; height: 40px; }
.tray { display: flex; align-items: center; flex: 1; padding-left: 14px; }
.chev { width: 18px; height: 10px; margin-right: 15px; }
.t24 { width: 24px; height: 24px; margin-right: 12px; }
.wifi { width: 20px; height: 20px; margin: 0 13px 0 3px; }
.snd { width: 22px; height: 18px; }
.lang { margin-left: 18px; font-size: 16.800px; width: 54px; }
.tray .clock { width: 94px; display: flex; flex-direction: column; align-items: center; font-size: 17.500px; line-height: 28px; white-space: nowrap; }
.note { width: 24px; height: 24px; margin-left: 28px; }
.peek { width: 2px; height: 60px; background: #6b7388; margin-left: 29px; }
```
